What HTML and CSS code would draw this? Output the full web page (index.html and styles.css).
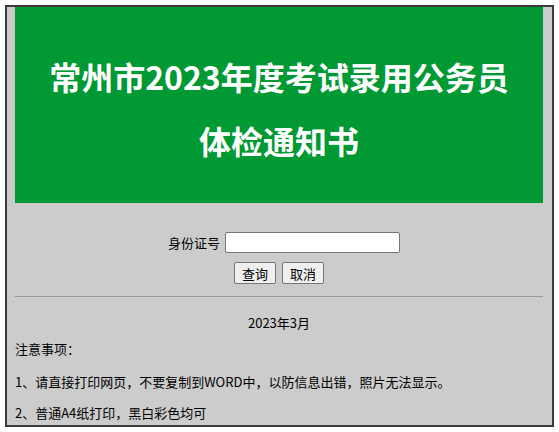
FILE: index.html
```html
<!DOCTYPE html>
<html lang="zh-CN">
<head>
    <meta charset="UTF-8">
    <meta name="viewport" content="width=device-width, initial-scale=1.0">
    <title>体检通知书</title>
    <link rel="stylesheet" href="styles.css">
</head>
<body>
    <div class="page">
        <div class="banner">
            <h1>常州市2023年度考试录用公务员<br>体检通知书</h1>
        </div>

        <form class="query" action="#" method="post">
            <div class="query-row">
                <label for="sfz">身份证号</label>
                <input type="text" id="sfz" name="sfz">
            </div>
            <div class="query-row buttons">
                <button type="submit">查询</button>
                <button type="reset">取消</button>
            </div>
        </form>

        <hr class="divider">

        <p class="date">2023年3月</p>
        <div class="notes">
            <p class="notes-title">注意事项：</p>
            <p>1、请直接打印网页，不要复制到WORD中，以防信息出错，照片无法显示。</p>
            <p>2、普通A4纸打印，黑白彩色均可</p>
        </div>
    </div>
</body>
</html>
```

FILE: styles.css
```css
body {
    margin: 0;
    background: #ffffff;
    font-family: "Noto Sans CJK SC", "Liberation Sans", sans-serif;
    font-size: 13px;
    color: #000;
}

.page {
    margin: 5px;
    height: 418px;
    overflow: hidden;
    border: 2px solid #3a3a3a;
    background: #cccccc;
    padding: 0 9px 0 8px;
}

.banner {
    background: #009933;
    padding: 37px 0 31px;
}

.banner h1 {
    margin: 0;
    color: #ffffff;
    text-align: center;
    font-size: 32px;
    font-weight: bold;
    line-height: 64px;
}

.query {
    padding-top: 29px;
    display: flex;
    flex-direction: column;
    align-items: center;
    gap: 9px;
}

.query-row {
    display: flex;
    align-items: center;
    gap: 5px;
}

.query-row label {
    line-height: 18px;
    margin-left: 10px;
}

.query-row input {
    width: 175px;
    height: 21px;
    box-sizing: border-box;
    border: 1px solid #767676;
    border-radius: 2px;
    background: #fff;
    padding: 0 3px;
}

.buttons {
    gap: 6px;
}

.buttons button {
    width: 42px;
    height: 22px;
    padding: 0;
    font-family: inherit;
    font-size: 13px;
    background: #efefef;
    border: 1px solid #767676;
    border-radius: 2px;
    color: #000;
}

.divider {
    margin: 12px 0 0;
    border: none;
    border-top: 1px solid #999999;
    height: 0;
}

.date {
    margin: 17px 0 0;
    text-align: center;
    line-height: 18px;
}

.notes p {
    margin: 0 0 13px;
    line-height: 18px;
}

.notes .notes-title {
    margin-top: 8px;
    margin-bottom: 15px;
}
```
